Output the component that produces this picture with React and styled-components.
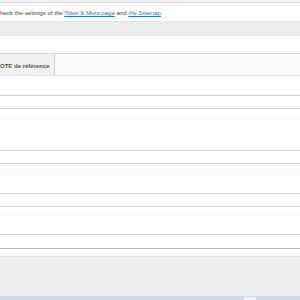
import styled, { createGlobalStyle } from "styled-components"

const Global = createGlobalStyle`
  html, body {
    margin: 0;
    padding: 0;
    width: 300px;
    height: 300px;
    overflow: hidden;
    background: #fff;
  }
  body {
    font-family: "Liberation Sans", Arial, sans-serif;
  }
`

const rows = [
  { top: 19, field: 12, hint: 8 },
  { top: 32, field: 12, hint: 8 },
  { top: 20, field: 12, hint: 6 },
  { top: 20, field: 13, hint: 0, last: true },
]

const App = () => {
  return (
    <>
      <Global />
      <Page>
        <TopStrip />
        <Notice>
          <p>
            heck the settings of the <a href="#t">Titles &amp; Meta page</a> and{" "}
            <a href="#s">the Sitemap</a>.
          </p>
        </Notice>
        <GrayBar />
        <Spacer />
        <TabsRow>
          <Tab>OTE de référence</Tab>
        </TabsRow>
        <Panel>
          {rows.map((r, i) => (
            <FieldGroup key={i} $top={r.top}>
              <Field $h={r.field} $last={r.last} />
              {!r.last && <Hint $gap={r.hint} />}
            </FieldGroup>
          ))}
        </Panel>
        <Footer />
        <Taskbar>
          <TrayItem />
        </Taskbar>
      </Page>
    </>
  )
}

export default App

const Page = styled.div`
  width: 300px;
  height: 300px;
  display: flex;
  flex-direction: column;
  overflow: hidden;
  background: #fff;
`

const TopStrip = styled.div`
  height: 2px;
  background: #f1f1f1;
  flex-shrink: 0;
`

const Notice = styled.div`
  height: 18px;
  border-top: 1px solid #dcdcdc;
  background: #fff;
  display: flex;
  align-items: center;
  flex-shrink: 0;
  p {
    margin: 0;
    font-size: 6.1px;
    color: #444;
    white-space: nowrap;
    padding-top: 1px;
  }
  a {
    color: #2e76b8;
    text-decoration: underline;
  }
`

const GrayBar = styled.div`
  height: 13px;
  background: #ececec;
  border-top: 1px solid #e4e4e4;
  border-bottom: 1px solid #e6e6e6;
  flex-shrink: 0;
`

const Spacer = styled.div`
  height: 17px;
  background: #fff;
  flex-shrink: 0;
`

const TabsRow = styled.div`
  height: 21px;
  border-top: 1px solid #d6d6d6;
  border-bottom: 1px solid #e2e2e2;
  background: #f8f8f8;
  display: flex;
  flex-shrink: 0;
`

const Tab = styled.div`
  padding: 2px 4px 0 0;
  background: #f0f0f0;
  border-right: 1px solid #d0d0d0;
  font-size: 6px;
  font-weight: 600;
  color: #555;
  display: flex;
  align-items: center;
  white-space: nowrap;
`

const Panel = styled.div`
  display: flex;
  flex-direction: column;
  background: #fff;
  flex-shrink: 0;
`

const FieldGroup = styled.div`
  padding-top: ${(p) => p.$top}px;
`

const Field = styled.div`
  height: ${(p) => p.$h}px;
  border-top: 1px solid #d0d0d0;
  border-bottom: 1px solid ${(p) => (p.$last ? "#c2c2c2" : "#dadada")};
  background: #fff;
`

const Hint = styled.div`
  margin-top: ${(p) => p.$gap}px;
  border-top: 1px solid #f1f1f1;
`

const Footer = styled.div`
  flex: 1;
  margin-top: 7px;
  background: #eeeeee;
  border-top: 1px solid #e2e2e2;
`

const Taskbar = styled.div`
  height: 4px;
  flex-shrink: 0;
  background: #cbd9f1;
  display: flex;
  justify-content: flex-end;
  padding-right: 44px;
`

const TrayItem = styled.div`
  width: 12px;
  margin-top: 1px;
  background: #eef3fb;
`
